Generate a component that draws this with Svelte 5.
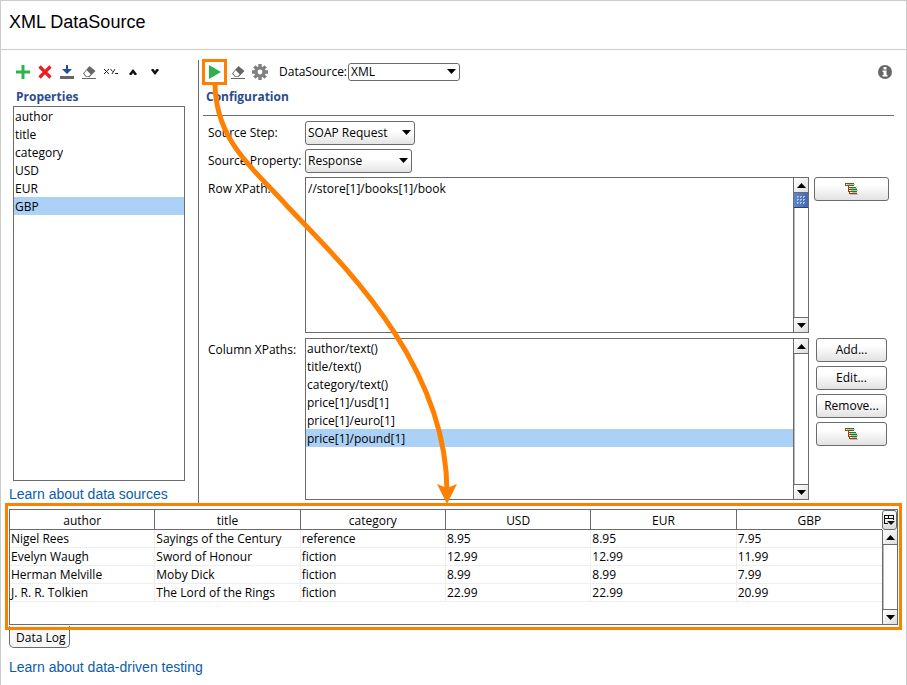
<script>
  const properties = ['author', 'title', 'category', 'USD', 'EUR', 'GBP'];
  const xpaths = [
    'author/text()',
    'title/text()',
    'category/text()',
    'price[1]/usd[1]',
    'price[1]/euro[1]',
    'price[1]/pound[1]',
  ];
  const rows = [
    ['Nigel Rees', 'Sayings of the Century', 'reference', '8.95', '8.95', '7.95'],
    ['Evelyn Waugh', 'Sword of Honour', 'fiction', '12.99', '12.99', '11.99'],
    ['Herman Melville', 'Moby Dick', 'fiction', '8.99', '8.99', '7.99'],
    ['J. R. R. Tolkien', 'The Lord of the Rings', 'fiction', '22.99', '22.99', '20.99'],
  ];
  let property = $state('GBP');
  let xpath = $state('price[1]/pound[1]');
  let rowXPath = $state('//store[1]/books[1]/book');
</script>

{#snippet eraser()}
  <svg width="16" height="16" viewBox="0 0 16 16" aria-hidden="true">
    <path d="M8.500 2l6 5-6 6H5L2 9.500z" fill="#666" />
    <path d="M5.700 6.200l4 4-2 2H5.300L3.200 9.300z" fill="#fff" />
    <path d="M1 14.500h14" stroke="#666" />
  </svg>
{/snippet}

{#snippet tree()}
  <svg width="15" height="14" viewBox="0 0 15 14" aria-hidden="true">
    <path d="M3 2h8v1H3zM6 6h7v1H6zM7 8h7v1H7zM6 12h8v1H6zM8 10h5v1H8z" fill="#bbb" />
    <path d="M1 1h1v2h8v1H1zM4 4h1v3h2v1H5v1h4v1H6v1h7v1H5v-2H4z" fill="#b03a10" />
    <path d="M2 1h8v1H2zM5 5h7v1H5zM6 7h7v1H6zM7 9h6v1H7z" fill="#0a8a1c" />
  </svg>
{/snippet}

{#snippet scrollbar(name, thumb)}
  <div class="scrollbar">
    <button aria-label="Scroll {name} up">
      <svg width="9" height="5" viewBox="0 0 9 5"><path d="M0 5L4.5 0 9 5z" /></svg>
    </button>
    <div class="track">{#if thumb}<div class="thumb"></div>{/if}</div>
    <button aria-label="Scroll {name} down">
      <svg width="9" height="5" viewBox="0 0 9 5"><path d="M0 0h9L4.5 5z" /></svg>
    </button>
  </div>
{/snippet}

<div class="page">
  <header><h1>XML DataSource</h1></header>

  <main>
    <aside>
      <div class="toolbar">
        <button aria-label="Add property">
          <svg width="16" height="16" viewBox="0 0 16 16"><path d="M8 1v14M1 8h14" stroke="#2db34a" stroke-width="3" /></svg>
        </button>
        <button aria-label="Remove property">
          <svg width="16" height="16" viewBox="0 0 16 16"><path d="M2.5 2.5l11 11M13.5 2.5l-11 11" stroke="#ed1c24" stroke-width="3.2" /></svg>
        </button>
        <button aria-label="Load properties">
          <svg width="16" height="16" viewBox="0 0 16 16"><path d="M7 1h2v4h4l-5 5-5-5h4z" fill="#1c4fa0" /><path d="M1 13.5h14" stroke="#666" stroke-width="3" /></svg>
        </button>
        <button aria-label="Clear properties">{@render eraser()}</button>
        <button aria-label="Rename property">
          <svg width="16" height="16" viewBox="0 0 16 16" fill="none" stroke="#222"><path d="M1 5l5 5M6 5l-5 5M7.500 5l2 2.500M12 5L9 10M12 9.500h3" /></svg>
        </button>
        <button aria-label="Move up">
          <svg width="16" height="16" viewBox="0 0 16 16"><path d="M4 10l4-5 4 5-1 1H9.500L8 9l-1.500 2H5z" fill="#111" /></svg>
        </button>
        <button aria-label="Move down">
          <svg width="16" height="16" viewBox="0 0 16 16"><path d="M4 6l1-1h1.500L8 7l1.500-2H11l1 1-4 5z" fill="#111" /></svg>
        </button>
      </div>
      <h2 id="props">Properties</h2>
      <ul class="list props" role="listbox" aria-labelledby="props">
        {#each properties as p}
          <li role="option" aria-selected={p === property} tabindex="-1" onclick={() => (property = p)} onkeydown={() => (property = p)}>{p}</li>
        {/each}
      </ul>
      <a class="sources" href="#sources">Learn about data sources</a>
    </aside>

    <section class="config">
      <div class="toolbar">
        <button class="run" aria-label="Run">
          <svg width="14" height="16" viewBox="0 0 14 16"><path d="M1 1l12 7-12 7z" fill="#2bb24c" /></svg>
        </button>
        <button aria-label="Clear">{@render eraser()}</button>
        <button aria-label="Options">
          <svg width="16" height="16" viewBox="-8 -8 16 16">
            <g stroke="#808080" stroke-width="3.400"><path d="M0-8V8M-8 0H8M-5.600-5.600L5.600 5.600M-5.600 5.600L5.600-5.600" /></g>
            <circle r="5.700" fill="#808080" /><circle r="2.400" fill="#fff" />
          </svg>
        </button>
        <label for="ds">DataSource:</label>
        <span class="combo source">
          <select id="ds"><option>XML</option></select>
          <svg width="9" height="5" viewBox="0 0 9 5"><path d="M0 0h9L4.500 5z" /></svg>
        </span>
        <button class="info" aria-label="Information">
          <svg width="14" height="14" viewBox="0 0 14 14">
            <circle cx="7" cy="7" r="7" fill="#666" />
            <path d="M5.500 2h3v2.500h-3zM4.500 5.500h4V10h1v1.500h-5V10h1V7h-1z" fill="#fff" />
          </svg>
        </button>
      </div>
      <h2>Configuration</h2>

      <div class="form">
        <label for="step">Source Step:</label>
        <span class="combo step">
          <select id="step"><option>SOAP Request</option></select>
          <svg width="9" height="5" viewBox="0 0 9 5"><path d="M0 0h9L4.500 5z" /></svg>
        </span>
        <span></span>

        <label for="prop">Source Property:</label>
        <span class="combo prop">
          <select id="prop"><option>Response</option></select>
          <svg width="9" height="5" viewBox="0 0 9 5"><path d="M0 0h9L4.500 5z" /></svg>
        </span>
        <span></span>

        <label for="row">Row XPath:</label>
        <div class="box row-box">
          <textarea id="row" spellcheck="false" bind:value={rowXPath}></textarea>
          {@render scrollbar('row XPath', true)}
        </div>
        <div class="actions"><button class="push wide" aria-label="Select row XPath">{@render tree()}</button></div>

        <span class="label" id="cols">Column XPaths:</span>
        <div class="box col-box">
          <ul class="list" role="listbox" aria-labelledby="cols">
            {#each xpaths as x}
              <li role="option" aria-selected={x === xpath} tabindex="-1" onclick={() => (xpath = x)} onkeydown={() => (xpath = x)}>{x}</li>
            {/each}
          </ul>
          {@render scrollbar('column XPaths', false)}
        </div>
        <div class="actions stack">
          <button class="push">Add...</button>
          <button class="push">Edit...</button>
          <button class="push">Remove...</button>
          <button class="push" aria-label="Select column XPath">{@render tree()}</button>
        </div>
      </div>
    </section>
  </main>

  <section class="log">
    <div class="grid">
      <div class="data">
        <table>
          <thead>
            <tr>{#each properties as p}<th>{p}</th>{/each}</tr>
          </thead>
          <tbody>
            {#each rows as r}
              <tr>{#each r as c}<td>{c}</td>{/each}</tr>
            {/each}
          </tbody>
        </table>
      </div>
      <div class="side">
        <button class="columns" aria-label="Choose columns">
          <svg width="11" height="12" viewBox="0 0 11 12">
            <path d="M0 1h10v5H9V5H1v4h3v1H0zM1 2v2h3V2zM5 2v2h4V2z" fill="#111" fill-rule="evenodd" />
            <path d="M3 7h8L7 11z" fill="#111" />
          </svg>
        </button>
        {@render scrollbar('data log', false)}
      </div>
    </div>
  </section>
  <button class="tab">Data Log</button>
  <footer><a href="#testing">Learn about data-driven testing</a></footer>

  <svg class="arrow" width="300" height="460" viewBox="200 50 300 460" aria-hidden="true">
    <path d="M215 84C216 140 250 165 288 207C335 257 447 360 447 492" fill="none" stroke="#ff8000" stroke-width="5" />
    <path d="M437 484l10 4 10-4-10 20z" fill="#ff8000" />
  </svg>
</div>

<style>
  :global(body) {
    margin: 0;
    background: #fff;
  }
  .page {
    position: relative;
    box-sizing: border-box;
    min-height: 100vh;
    border: 1px solid #ccc;
    font: 12px/18px 'Open Sans', 'Noto Sans', sans-serif;
    color: #000;
  }
  button, select, textarea {
    font: inherit;
    color: inherit;
    margin: 0;
    padding: 0;
    box-sizing: border-box;
  }
  header {
    border-bottom: 1px solid #ccc;
    padding: 9px 8px 15px;
  }
  h1 {
    margin: 0;
    font: 18px/24px 'Liberation Sans', Arial, sans-serif;
  }
  h2 {
    margin: 0;
    font-size: 12px;
    line-height: 18px;
    font-weight: 700;
    color: #2a4b8d;
  }
  a {
    font: 14px/18px 'Liberation Sans', Arial, sans-serif;
    color: #0b5cad;
    text-decoration: none;
  }
  main {
    display: grid;
    grid-template-columns: 197px 1fr;
    padding-top: 10px;
  }
  aside {
    display: flex;
    flex-direction: column;
    padding: 0 13px 0 12px;
  }
  aside h2 {
    padding-left: 3px;
  }
  .toolbar {
    display: flex;
    align-items: center;
    height: 24px;
    margin-bottom: 4px;
  }
  .toolbar button {
    display: flex;
    align-items: center;
    justify-content: center;
    width: 22px;
    height: 22px;
    border: 0;
    background: none;
  }
  aside .toolbar {
    margin-left: -1px;
  }
  .list {
    margin: 0;
    padding: 0;
    list-style: none;
    flex: 1;
  }
  .list li {
    padding: 0 1px;
    height: 18px;
    line-height: 20px;
    cursor: default;
  }
  .list li[aria-selected='true'] {
    background: #abd1f7;
  }
  .props {
    border: 1px solid #6b6b6b;
  }
  .sources {
    margin-left: -4px;
    padding: 5px 0 0;
    line-height: 17px;
  }
  .config {
    border-left: 1px solid #6b6b6b;
    padding: 0 12px 3px 4px;
  }
  .config .toolbar button.run {
    width: 25px;
    height: 26px;
    margin-left: -1px;
    border: 3px solid #ff8000;
  }
  .toolbar label {
    margin: 0 1px 0 8px;
  }
  .toolbar .info {
    margin-left: auto;
    margin-right: -2px;
  }
  .config h2 {
    padding: 0 3px 9px;
    border-bottom: 1px solid #6b6b6b;
  }
  .combo {
    position: relative;
    display: block;
    height: 24px;
  }
  .combo select {
    appearance: none;
    display: block;
    width: 100%;
    height: 100%;
    padding: 0 2px;
    border: 1px solid #6b6b6b;
    border-radius: 3px;
    background: linear-gradient(#fff 40%, #e4e4e4);
  }
  .combo svg {
    position: absolute;
    right: 4px;
    top: 50%;
    margin-top: -3px;
    pointer-events: none;
  }
  .source {
    width: 112px;
    height: 18px;
  }
  .source select {
    background: #fff;
    line-height: 16px;
  }
  .step {
    width: 110px;
  }
  .prop {
    width: 107px;
  }
  .form {
    display: grid;
    grid-template-columns: 97px 1fr 85px;
    row-gap: 4px;
    padding: 5px 0 0 5px;
  }
  .form label, .label {
    padding-top: 3px;
    white-space: nowrap;
  }
  .actions {
    padding-left: 5px;
  }
  .box {
    display: flex;
    box-sizing: border-box;
    border: 1px solid #6b6b6b;
  }
  .row-box {
    height: 156px;
    margin-bottom: 1px;
  }
  .col-box {
    height: 162px;
  }
  textarea {
    flex: 1;
    border: 0;
    outline: 0;
    resize: none;
    padding: 2px;
    overflow: hidden;
  }
  .scrollbar {
    display: flex;
    flex-direction: column;
    flex: none;
    width: 14px;
    border-left: 1px solid #6b6b6b;
  }
  .scrollbar button {
    display: flex;
    align-items: center;
    justify-content: center;
    height: 15px;
    border: 0;
    background: linear-gradient(135deg, #fff, #ddd);
  }
  .scrollbar button:first-child {
    border-bottom: 1px solid #6b6b6b;
  }
  .scrollbar button:last-child {
    border-top: 1px solid #6b6b6b;
  }
  .track {
    flex: 1;
    border-left: 1px solid #bbb;
  }
  .thumb {
    height: 15px;
    margin-left: -1px;
    border-bottom: 1px solid #23407c;
    background:
      conic-gradient(#a9c3ea 25%, transparent 0) 0 0 / 3px 3px content-box,
      linear-gradient(90deg, #6288c8, #4468ac);
    box-sizing: border-box;
    padding: 3px 2px;
  }
  .push {
    display: flex;
    align-items: center;
    justify-content: center;
    width: 71px;
    height: 24px;
    border: 1px solid #6b6b6b;
    border-radius: 3px;
    background: linear-gradient(#fff 30%, #e2e2e2);
  }
  .wide {
    width: 75px;
  }
  .stack {
    display: flex;
    flex-direction: column;
    gap: 4px;
    padding-left: 7px;
  }
  .log {
    position: relative;
    z-index: 1;
    margin: 0 4px;
    padding: 3px 0 2px 1px;
    border: 3px solid #ff8000;
  }
  .grid {
    display: flex;
    height: 114px;
    margin-right: 1px;
    border: 1px solid #6b6b6b;
    background: #fff;
  }
  .data {
    flex: 1;
  }
  table {
    width: 100%;
    table-layout: fixed;
    border-collapse: separate;
    border-spacing: 0;
  }
  th, td {
    padding: 0 1px;
    height: 17px;
    line-height: 17px;
    text-align: left;
    font-weight: 400;
    border-right: 1px solid #eee;
    border-bottom: 1px solid #eee;
  }
  th {
    padding-top: 1px;
    height: 18px;
    text-align: center;
    border-color: #6b6b6b;
  }
  th:last-child, td:last-child {
    border-right: 0;
  }
  .side {
    display: flex;
    flex-direction: column;
  }
  .side :global(.scrollbar) {
    flex: 1;
  }
  .columns {
    display: flex;
    align-items: center;
    justify-content: center;
    width: 15px;
    height: 20px;
    border: 1px solid #6b6b6b;
    border-radius: 3px;
    background: linear-gradient(#fff, #ddd);
  }
  .tab {
    display: block;
    height: 22px;
    margin: -4px 0 0 8px;
    padding: 3px 4px 0 6px;
    line-height: 16px;
    border: 1px solid #6b6b6b;
    border-top: 0;
    border-radius: 0 0 5px 5px;
    background: #f8f8f8;
  }
  footer {
    padding: 10px 8px 8px;
  }
  .arrow {
    position: absolute;
    left: 199px;
    top: 49px;
    z-index: 2;
    pointer-events: none;
  }
</style>
